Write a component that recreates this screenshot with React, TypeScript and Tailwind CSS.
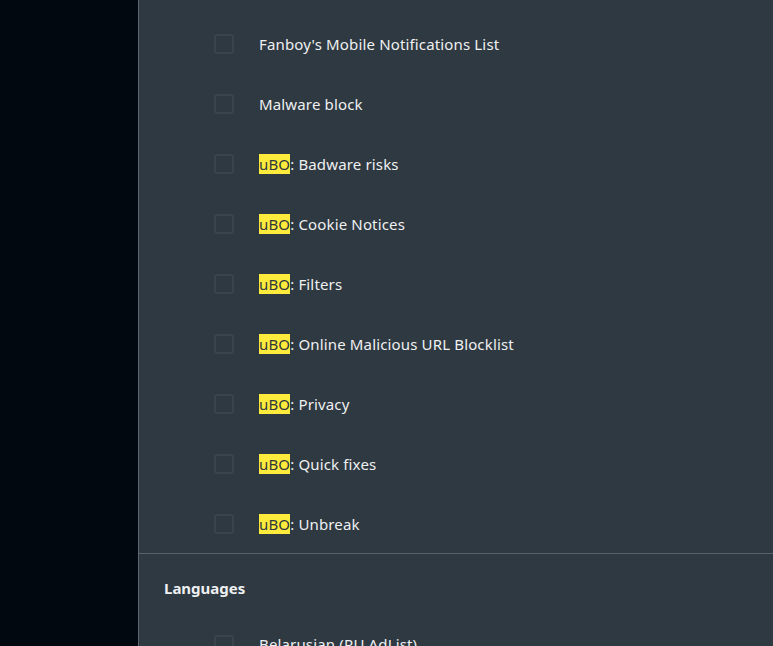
const rows = [
  { text: "Fanboy's Mobile Notifications List" },
  { text: "Malware block" },
  { ubo: true, text: ": Badware risks" },
  { ubo: true, text: ": Cookie Notices" },
  { ubo: true, text: ": Filters" },
  { ubo: true, text: ": Online Malicious URL Blocklist" },
  { ubo: true, text: ": Privacy" },
  { ubo: true, text: ": Quick fixes" },
  { ubo: true, text: ": Unbreak" },
];

function Row({ ubo, text }: { ubo?: boolean; text: string }) {
  return (
    <div className="flex h-[60px] items-center pl-[75px]">
      <span className="h-5 w-5 shrink-0 rounded-[3px] border-2 border-[#3b444b]" />
      <span className="ml-[25px] text-[15px] tracking-[0.15px] text-[#eef0f1]">
        {ubo && <span className="bg-[#ffeb3b] text-[#30393f]">uBO</span>}
        {text}
      </span>
    </div>
  );
}

export default function App() {
  return (
    <div
      className="flex h-[646px] w-[773px] overflow-hidden"
      style={{ fontFamily: '"Noto Sans", "Open Sans", sans-serif' }}
    >
      <div className="w-[138px] shrink-0 bg-[#02080f]" />
      <div className="flex-1 border-l border-[#5f666d] bg-[#2e3941]">
        <div className="pt-[14px]">
          {rows.map((r) => (
            <Row key={r.text} ubo={r.ubo} text={r.text} />
          ))}
        </div>
        <div className="-mt-px border-t border-[#59626a]" />
        <div className="pl-[25px] pt-[23px] text-[15px] font-bold text-[#eef0f1]">
          Languages
        </div>
        <div className="pt-[15px]">
          <Row text="Belarusian (RU AdList)" />
        </div>
      </div>
    </div>
  );
}
